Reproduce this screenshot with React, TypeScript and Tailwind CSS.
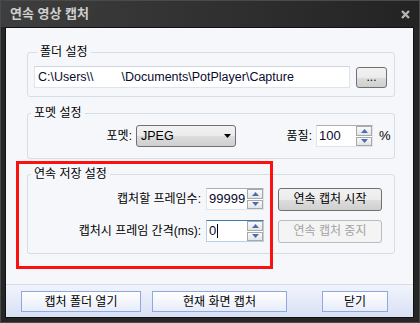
import type { ReactNode } from "react";

const font = "font-['Liberation_Sans','Noto_Sans_CJK_KR',sans-serif]";

const win7Button =
  "flex items-center justify-center rounded-[3px] border border-[#707070] bg-[linear-gradient(#f2f2f2_0%,#ebebeb_50%,#dddddd_51%,#cfcfcf_100%)] text-[12px] text-black";

const blueButton =
  "flex h-[21px] items-center justify-center border border-[#8fa7e2] bg-[linear-gradient(#ffffff,#e6ecf9)] text-[12px] text-black";

function GroupBox({ title, children, className = "" }: { title: string; children: ReactNode; className?: string }) {
  return (
    <fieldset className={`ml-[21px] w-[368px] rounded-[3px] border border-[#d5dde5] ${className}`}>
      <legend className="ml-[3px] px-[3px] text-[12px] leading-[14px] text-black">{title}</legend>
      {children}
    </fieldset>
  );
}

function Arrow({ up }: { up?: boolean }) {
  return (
    <svg width="7" height="4" viewBox="0 0 7 4">
      <path d={up ? "M0 4 L3.5 0 L7 4 Z" : "M0 0 L3.5 4 L7 0 Z"} fill="#4a6db5" />
    </svg>
  );
}

function Spinner() {
  return (
    <div className="flex h-full w-[16px] flex-col gap-[1px]">
      <div className="flex flex-1 items-center justify-center border border-[#a8a8a8] bg-[linear-gradient(#fafafa,#e4e4e4)]">
        <Arrow up />
      </div>
      <div className="flex flex-1 items-center justify-center border border-[#a8a8a8] bg-[linear-gradient(#fafafa,#e4e4e4)]">
        <Arrow />
      </div>
    </div>
  );
}

function NumberField({ value, width, focused }: { value: string; width: string; focused?: boolean }) {
  const border = focused
    ? "border-[#b5cfe7] border-t-[#3d7bad]"
    : "border-[#dfe3ea] border-t-[#abadb3]";
  return (
    <div className={`flex h-[22px] ${width} items-center border bg-white ${border}`}>
      <span className="flex flex-1 items-center pl-[2px] text-[13px] text-[#0a0a30]">
        {value}
        {focused && <span className="ml-[1px] inline-block h-[14px] w-[1px] bg-black" />}
      </span>
      <Spinner />
    </div>
  );
}

export default function App() {
  return (
    <div className={`${font} flex h-[323px] w-[420px] flex-col border border-[#4a4a4a] bg-[#262626]`}>
      <div className="flex h-[26px] shrink-0 items-center justify-between bg-[linear-gradient(90deg,#3e3e3e,#2e2e2e_60%,#232323)] pl-[9px] pr-[9px]">
        <span className="text-[13px] font-bold text-[#cfcfcf]">연속 영상 캡처</span>
        <svg width="9" height="9" viewBox="0 0 9 9">
          <path d="M1 1 L8 8 M8 1 L1 8" stroke="#b4b4b4" strokeWidth="2.4" />
        </svg>
      </div>

      <div className="relative mb-[4px] ml-[4px] mr-[5px] flex flex-1 flex-col border border-[#111] bg-[#f6f7fb]">
        <div className="pt-[17px]">
          <GroupBox title="폴더 설정" className="pb-[8px] pl-[6px] pr-[7px] pt-[7px]">
            <div className="flex items-center gap-[6px]">
              <div className="flex h-[22px] w-[316px] items-center border border-[#dfe3ea] border-t-[#cfd5dd] bg-white pl-[3px] text-[12.5px] text-[#0a0a30]">
                <span>C:\Users\\</span>
                <span className="inline-block w-[28px]" />
                <span>\Documents\PotPlayer\Capture</span>
              </div>
              <button className={`${win7Button} h-[21px] w-[31px] text-[10px] leading-none`}>...</button>
            </div>
          </GroupBox>

          <GroupBox title="포멧 설정" className="mt-[9px] pb-[11px] pt-[5px]">
            <div className="flex items-center text-[12px] text-black">
              <span className="w-[104px] text-right">포멧:</span>
              <div className="ml-[4px] flex h-[22px] w-[100px] items-center justify-between rounded-[3px] border border-[#707070] bg-[linear-gradient(#f2f2f2_0%,#ebebeb_50%,#dddddd_51%,#cfcfcf_100%)] pl-[4px] pr-[4px]">
                <span className="text-[12.5px]">JPEG</span>
                <svg width="7" height="4" viewBox="0 0 7 4">
                  <path d="M0 0 L3.5 4 L7 0 Z" fill="#000" />
                </svg>
              </div>
              <span className="w-[76px] text-right">품질:</span>
              <div className="ml-[4px]">
                <NumberField value="100" width="w-[57px]" />
              </div>
              <span className="ml-[6px] text-[13px]">%</span>
            </div>
          </GroupBox>

          <GroupBox title="연속 저장 설정" className="mt-[8px] pb-[10px] pt-[6px]">
            <div className="flex flex-col gap-[8px] text-[12px] text-black">
              <div className="flex h-[24px] items-center">
                <span className="w-[173px] text-right">캡처할 프레임수:</span>
                <div className="ml-[5px]">
                  <NumberField value="99999" width="w-[58px]" />
                </div>
                <button className={`${win7Button} ml-[14px] h-[23px] w-[104px]`}>연속 캡처 시작</button>
              </div>
              <div className="flex h-[24px] items-center">
                <span className="w-[173px] text-right">캡처시 프레임 간격(ms):</span>
                <div className="ml-[5px]">
                  <NumberField value="0" width="w-[58px]" focused />
                </div>
                <button className="ml-[14px] flex h-[23px] w-[104px] items-center justify-center rounded-[3px] border border-[#b8bcc0] bg-[#f4f4f4] text-[12px] text-[#a3a3a3]">
                  연속 캡처 중지
                </button>
              </div>
            </div>
          </GroupBox>
        </div>

        <div className="flex-1" />

        <div className="flex h-[33px] items-start border-t border-[#d3d9e5] bg-[linear-gradient(#f1f4fb,#d8e0f4)] pt-[6px]">
          <button className={`${blueButton} ml-[15px] w-[120px]`}>캡처 폴더 열기</button>
          <button className={`${blueButton} ml-[11px] w-[135px]`}>현재 화면 캡처</button>
          <button className={`${blueButton} ml-[35px] w-[66px]`}>닫기</button>
        </div>

        <div className="pointer-events-none absolute left-[10px] top-[133px] h-[108px] w-[257px] border-[3px] border-[#ff1010]" />
      </div>
    </div>
  );
}
